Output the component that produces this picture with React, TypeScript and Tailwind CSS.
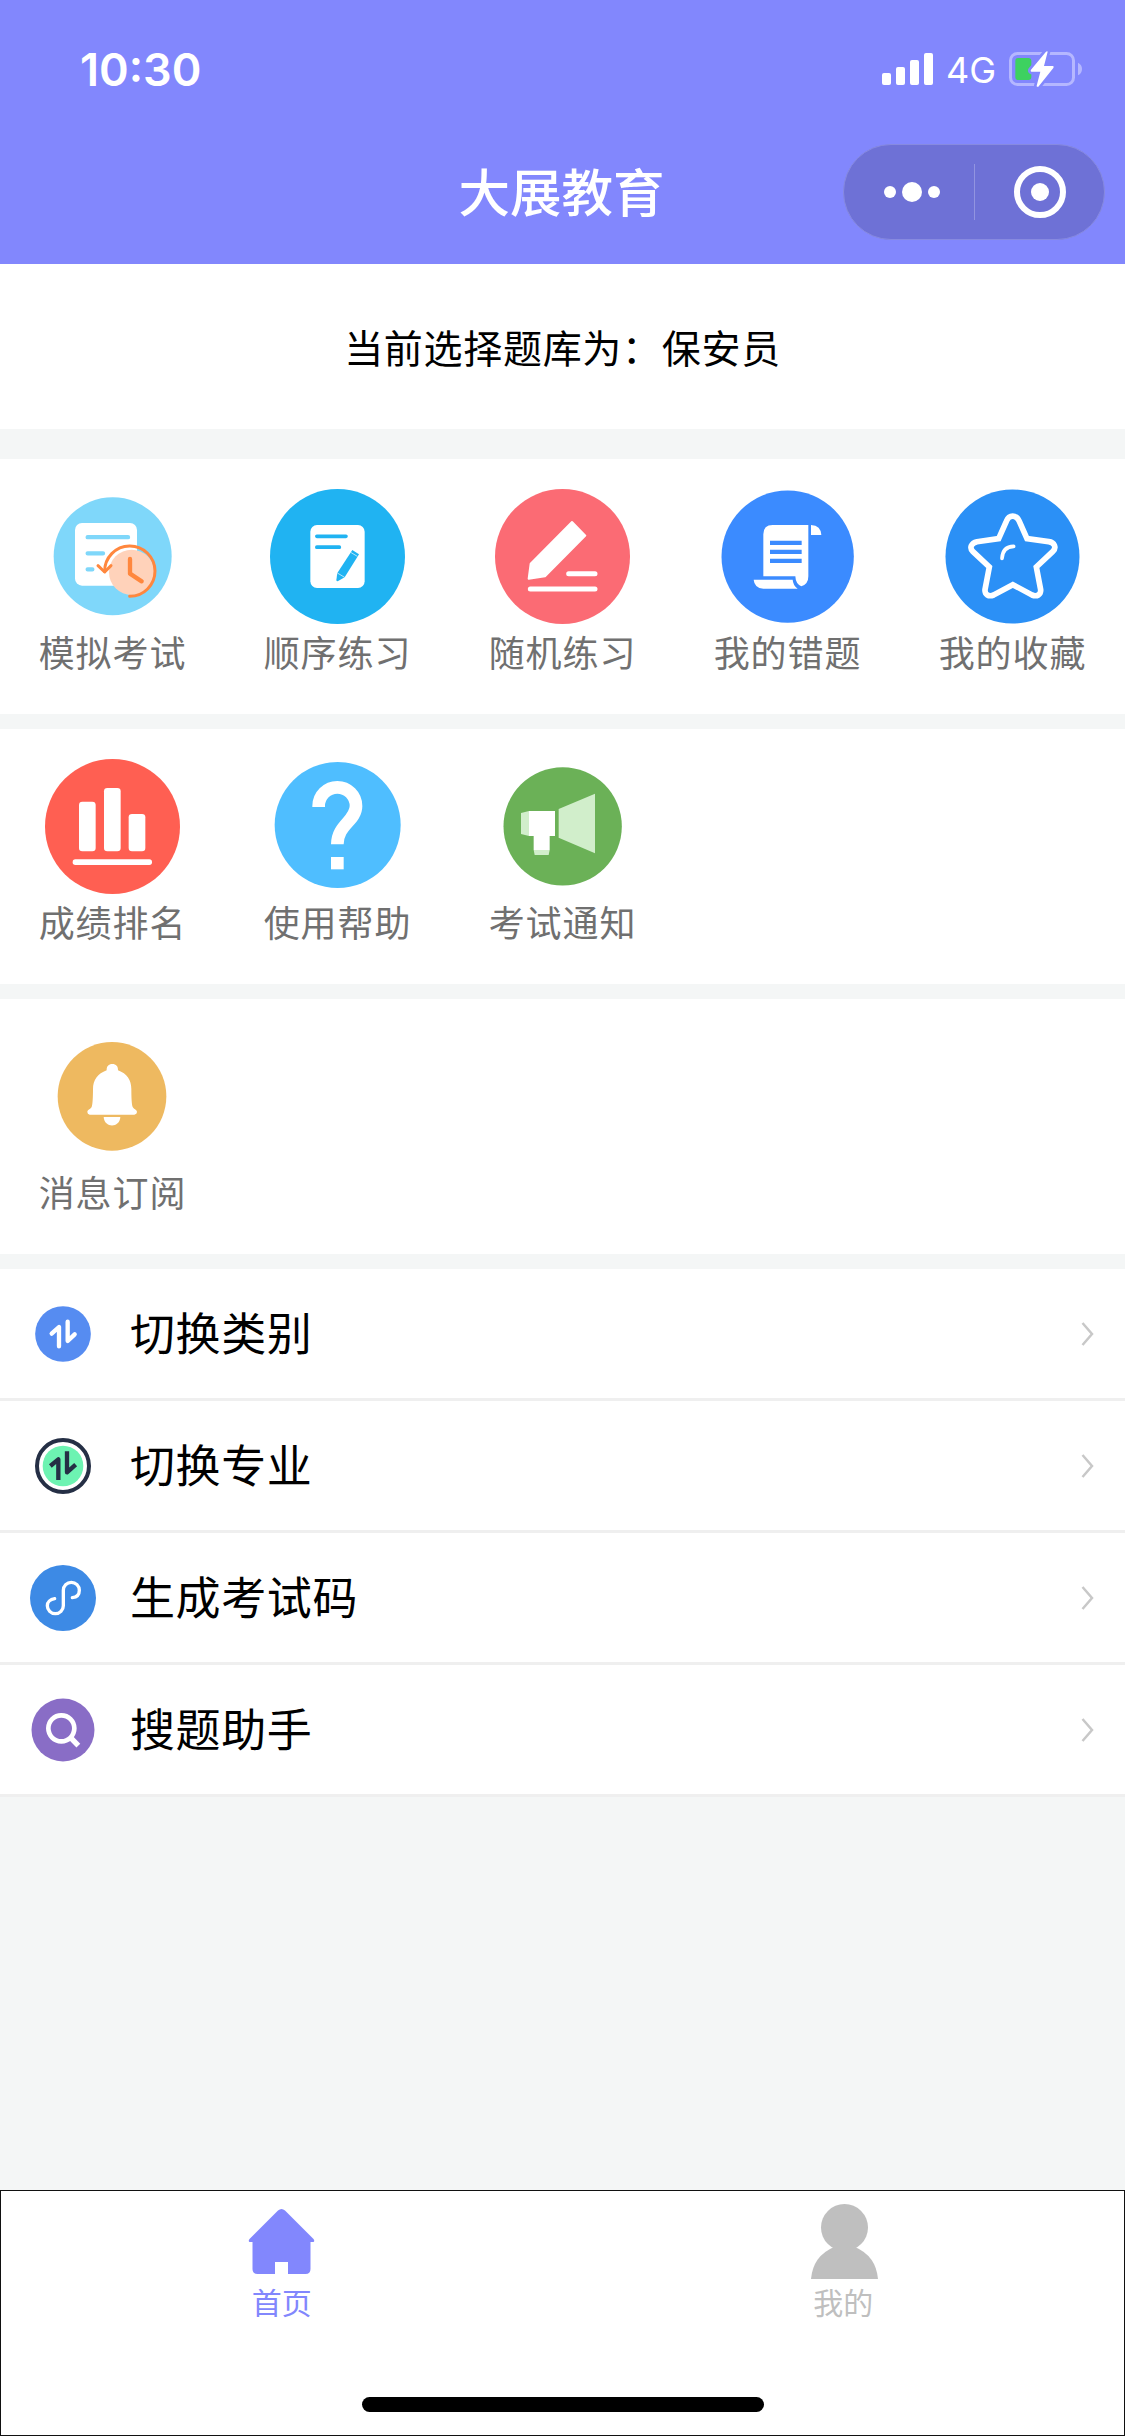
import React from 'react';

interface MenuItem {
  label: string;
  icon: React.ReactNode;
}

const ExamIcon = () => (
  <>
    <circle cx="203" cy="202" r="177" fill="#7fd7fa" />
    <rect x="90" y="102" width="186" height="188" rx="21" fill="#fff" />
    <path d="M128 144.5H249M128 193H174M128 241H142" stroke="#7fd7fa" strokeWidth="13" strokeLinecap="round" />
    <circle cx="260" cy="250" r="68" fill="#ffd2ba" />
    <g fill="none" stroke="#ff873e" strokeLinecap="round">
      <path d="M179 248A75.500 75.500 0 1 1 254 322" strokeWidth="9" />
      <path d="M159 230L179 249L198 230" strokeWidth="9" strokeLinejoin="round" />
      <path d="M255 210V254L290 277" strokeWidth="13" strokeLinejoin="round" />
    </g>
  </>
);

const OrderIcon = () => (
  <>
    <circle cx="202.5" cy="202.5" r="202.5" fill="#20b3f2" />
    <rect x="121" y="108" width="163" height="189" rx="20" fill="#fff" />
    <path d="M140.500 142H228M140.500 174.500H208" stroke="#20b3f2" strokeWidth="11" strokeLinecap="round" />
    <path d="M247 183L267 196L224 265L203 277Q199 277 199 273L202 252Z" fill="#20b3f2" />
    <path d="M242 190L262 202M202 252L224 265" stroke="#fff" strokeWidth="2" />
  </>
);

const RandomIcon = () => (
  <>
    <circle cx="202.5" cy="202.5" r="202.5" fill="#fb6b74" />
    <path d="M231 99L271 140L150 262L101 269L107 224Z" fill="#fff" stroke="#fff" strokeWidth="6" strokeLinejoin="round" />
    <path d="M221 254H300M106 300H300" stroke="#fff" strokeWidth="15" strokeLinecap="round" />
  </>
);

const WrongIcon = () => (
  <>
    <circle cx="203" cy="203" r="198.500" fill="#3b8bff" />
    <path d="M158 108H265V262Q265 286 244 292Q227 285 226 262H130V136Q130 108 158 108Z" fill="#fff" />
    <path d="M273 108Q303 110 304 138H273Z" fill="#fff" />
    <path d="M101 272H218Q219 289 233 299H130Q103 297 101 272Z" fill="#fff" />
    <path d="M150 161.500H245M150 188.500H245M150 215.500H245" stroke="#3b8bff" strokeWidth="13" />
  </>
);

const FavoriteIcon = () => (
  <>
    <circle cx="202.500" cy="202.500" r="201" fill="#2b90f6" />
    <path
      d="M161 149L184 97C192 76 214 76 223 97L246 149L311 158C328 160 336 176 323 188L274 234L287 302C288 317 276 324 261 318L203.500 287L146 318C131 324 119 317 120 302L133 234L84 188C72 176 79 162 96 158Z"
      fill="none"
      stroke="#fff"
      strokeWidth="17"
    />
    <path d="M171 208Q173 173 206 172" fill="none" stroke="#fff" strokeWidth="11" strokeLinecap="round" />
  </>
);

const RankIcon = () => (
  <>
    <circle cx="202.500" cy="202.500" r="202.500" fill="#ff5f52" />
    <g fill="#fff">
      <rect x="102" y="128" width="50" height="149" rx="10" />
      <rect x="177" y="87" width="50" height="190" rx="10" />
      <rect x="251" y="165" width="50" height="112" rx="10" />
      <rect x="83" y="301" width="238" height="17" rx="8" />
    </g>
  </>
);

const HelpIcon = () => (
  <>
    <circle cx="203" cy="198" r="189" fill="#4fbeff" />
    <path d="M146 144V141A56 56 0 0 1 258 141C258 186 202 197 202 256" fill="none" stroke="#fff" strokeWidth="38" />
    <rect x="183" y="294" width="38" height="37" fill="#fff" />
  </>
);

const NoticeIcon = () => (
  <>
    <circle cx="203" cy="202" r="177.500" fill="#6bb157" />
    <path d="M191 150L300 104V283L191 236ZM78 162L102 156V231L78 225ZM116 273H164L161 288H119Z" fill="#d1eecb" />
    <path d="M102 156H180V231H164V273H116V231H102Z" fill="#fff" />
  </>
);

const BellIcon = () => (
  <>
    <circle cx="201" cy="202" r="163" fill="#eeb960" />
    <g fill="#fff">
      <path d="M185 124C184 112 191 105 202 105C213 105 220 112 219 124C246 134 259 153 259 180C259 204 260 226 263 234C267 241 276 242 276 249Q276 256 268 257H134Q127 256 127 249C127 242 136 241 140 234C143 226 144 204 144 180C144 153 158 134 185 124Z" />
      <path d="M176 264H226C224 298 178 298 176 264Z" />
    </g>
  </>
);

const examItems: MenuItem[] = [
  { label: '模拟考试', icon: <ExamIcon /> },
  { label: '顺序练习', icon: <OrderIcon /> },
  { label: '随机练习', icon: <RandomIcon /> },
  { label: '我的错题', icon: <WrongIcon /> },
  { label: '我的收藏', icon: <FavoriteIcon /> },
];

const toolItems: MenuItem[] = [
  { label: '成绩排名', icon: <RankIcon /> },
  { label: '使用帮助', icon: <HelpIcon /> },
  { label: '考试通知', icon: <NoticeIcon /> },
];

const messageItems: MenuItem[] = [{ label: '消息订阅', icon: <BellIcon /> }];

const listItems: MenuItem[] = [
  {
    label: '切换类别',
    icon: (
      <>
        <circle cx="99" cy="99" r="83.500" fill="#568cf1" />
        <path d="M65 98L87 78V136M113 62V120L134 100" fill="none" stroke="#fff" strokeWidth="13" strokeLinecap="round" strokeLinejoin="round" />
      </>
    ),
  },
  {
    label: '切换专业',
    icon: (
      <>
        <circle cx="99" cy="99" r="78" fill="#fff" stroke="#252f45" strokeWidth="12" />
        <circle cx="99" cy="99" r="61" fill="#6df3b2" />
        <path d="M61 99L85 79V141M111 55V118L137 95" fill="none" stroke="#252f45" strokeWidth="13" strokeLinejoin="round" />
      </>
    ),
  },
  {
    label: '生成考试码',
    icon: (
      <>
        <circle cx="99" cy="99" r="99" fill="#3d8ae5" />
        <path
          d="M74 101C60 103 52 112 52 122A24 24 0 0 0 100 122V76A24 24 0 0 1 148 76C148 89 140 97 127 98"
          fill="none"
          stroke="#fff"
          strokeWidth="10"
          strokeLinecap="round"
        />
      </>
    ),
  },
  {
    label: '搜题助手',
    icon: (
      <>
        <circle cx="99" cy="99" r="94.500" fill="#896dc6" />
        <circle cx="94" cy="94" r="39" fill="none" stroke="#fff" strokeWidth="14" />
        <path d="M121 121L145 146" stroke="#fff" strokeWidth="16" />
      </>
    ),
  },
];

const StatusBar = () => (
  <div className="flex h-[138px] items-center justify-between pl-20 pr-[42px]">
    <span className="font-['Inter'] text-[45px] leading-none font-semibold text-white">10:30</span>
    <div className="flex items-center">
      <div className="flex items-end gap-[5px]">
        <i className="h-3 w-[9px] rounded-[2px] bg-white" />
        <i className="h-[18px] w-[9px] rounded-[2px] bg-white" />
        <i className="h-[25px] w-[9px] rounded-[2px] bg-white" />
        <i className="h-8 w-[9px] rounded-[2px] bg-white" />
      </div>
      <span className="ml-[13px] w-[62px] pt-0.5 font-['Inter'] text-[36px] leading-none text-white">4G</span>
      <svg className="h-[38px] w-[75px]" viewBox="0 0 225 114">
        <rect x="7.500" y="10.500" width="189" height="93" rx="21" fill="none" stroke="#b5b7ff" strokeWidth="9" />
        <path d="M210 38Q222 44 222 57Q222 70 210 76Z" fill="#b5b7ff" />
        <rect x="22" y="24" width="48" height="66" rx="9" fill="#3dd160" />
        <path
          d="M119 5L108 48H135Q139 49 136 54L91 110Q86 112 86 107L97 65H70Q66 63 69 59L114 5Q118 2 119 5Z"
          fill="#fff"
          stroke="#8287fd"
          strokeWidth="16"
          paintOrder="stroke"
        />
      </svg>
    </div>
  </div>
);

const Capsule = () => (
  <div className="flex h-24 w-[262px] items-center rounded-full border border-[#878ae0] bg-[#6e71d6]">
    <div className="flex w-[130px] items-center justify-center gap-[6px] pl-1.5">
      <i className="size-3 rounded-full bg-white" />
      <i className="size-5 rounded-full bg-white" />
      <i className="size-3 rounded-full bg-white" />
    </div>
    <i className="h-14 w-px bg-[#9294e0]" />
    <div className="flex flex-1 justify-center">
      <div className="flex size-[52px] items-center justify-center rounded-full border-[6px] border-white">
        <i className="size-[18px] rounded-full bg-white" />
      </div>
    </div>
  </div>
);

const MenuGrid = ({ items }: { items: MenuItem[] }) => (
  <div className="grid h-[255px] shrink-0 grid-cols-5 bg-white">
    {items.map((item) => (
      <div key={item.label} className="flex flex-col items-center pt-[30px]">
        <svg className="size-[135px]" viewBox="0 0 405 405">
          {item.icon}
        </svg>
        <span className="mt-0.5 text-[36px] leading-[50px] tracking-[0.9px] text-[#707070]">{item.label}</span>
      </div>
    ))}
  </div>
);

export default function App() {
  return (
    <div className="flex h-[2436px] w-[1125px] flex-col overflow-hidden bg-[#f4f6f6] font-['Noto_Sans_CJK_SC',sans-serif]">
      <header className="h-[264px] shrink-0 bg-[#8287fd]">
        <StatusBar />
        <div className="grid h-[108px] grid-cols-[1fr_auto_1fr] items-center pr-5">
          <span />
          <h1 className="pb-1 pl-[18px] text-[51.5px] leading-none font-medium text-white">大展教育</h1>
          <div className="flex justify-end">
            <Capsule />
          </div>
        </div>
      </header>

      <div className="flex h-[165px] shrink-0 items-center justify-center bg-white text-[39px] tracking-[0.7px] text-black">
        当前选择题库为：保安员
      </div>

      <main className="mt-[30px] flex flex-col gap-[15px]">
        <MenuGrid items={examItems} />
        <MenuGrid items={toolItems} />
        <MenuGrid items={messageItems} />

        <ul>
          {listItems.map((item) => (
            <li key={item.label} className="flex h-[132px] items-center border-b-[3px] border-[#efefef] bg-white pr-[30px] pl-[30px]">
              <svg className="size-[66px]" viewBox="0 0 198 198">
                {item.icon}
              </svg>
              <span className="ml-[34px] flex-1 pb-[5px] text-[45px] leading-none tracking-[0.6px] text-black">{item.label}</span>
              <svg className="h-6 w-3.5" viewBox="0 0 14 24" fill="none" stroke="#c8c8c8" strokeWidth="2.500">
                <path d="M1.500 1L11 12L1.500 23" />
              </svg>
            </li>
          ))}
        </ul>
      </main>

      <nav className="mt-auto flex h-[246px] flex-col border border-[#111] bg-white">
        <div className="grid grid-cols-2 pt-2.5 text-[30px] leading-[38px]">
          <div className="flex flex-col items-center text-[#8287fd]">
            <svg className="size-[81px]" viewBox="0 0 81 81" fill="currentColor">
              <path d="M37 9.500Q40.500 6.500 44 9.500L72.500 38Q74 40 72.500 41H69.500V68Q69.500 73 64.500 73H47V61H34V73H16.500Q11.500 73 11.500 68V41H8.500Q7 40 8.500 38Z" />
            </svg>
            <span>首页</span>
          </div>
          <div className="flex flex-col items-center text-[#bfbfbf]">
            <svg className="size-[81px]" viewBox="0 0 81 81" fill="currentColor">
              <circle cx="41.500" cy="26.500" r="23.500" />
              <path d="M31 46H52Q73 55 75 78H8Q10 55 31 46Z" />
            </svg>
            <span>我的</span>
          </div>
        </div>
        <div className="mt-auto mb-[23px] h-[15px] w-[402px] self-center rounded-full bg-black" />
      </nav>
    </div>
  );
}
